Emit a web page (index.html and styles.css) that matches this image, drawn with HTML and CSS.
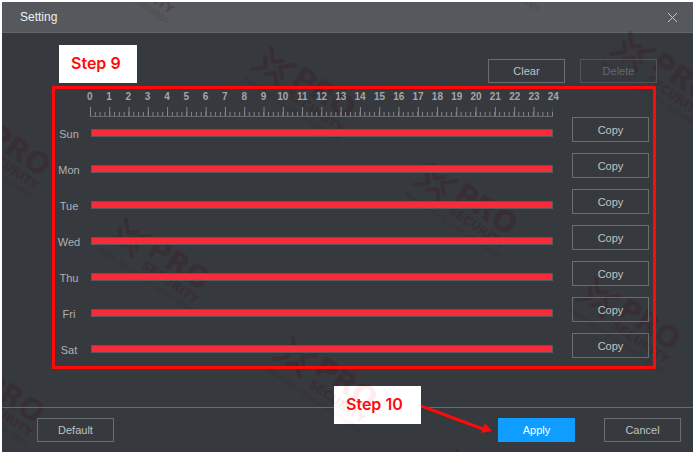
FILE: index.html
```html
<!DOCTYPE html>
<html lang="en">
<head>
<meta charset="utf-8">
<title>Setting</title>
<link rel="stylesheet" href="styles.css">
</head>
<body>
<main class="dialog">
  <header class="dialog-head">
    <h1>Setting</h1>
    <button class="close" aria-label="Close"><svg width="11" height="11" viewBox="0 0 11 11"><path d="M1 1L10 10M10 1L1 10"/></svg></button>
  </header>

  <svg class="watermark" aria-hidden="true">
    <defs>
      <g id="mark">
        <path class="mark-x" d="M-2-19L0-5L9-6M-8-10L-7 0L-21 2M22-2L7 0L9 11M4 19L2 6L-8 7"/>
        <g transform="rotate(34)">
          <text class="mark-name" x="23" y="3">PRO</text>
          <text class="mark-sub" x="27" y="17">SECURITY</text>
          <text class="mark-small" x="-19" y="27">Master Security Licence 000108925</text>
        </g>
      </g>
    </defs>
    <use href="#mark" x="101" y="-54"/>
    <use href="#mark" x="471" y="-66"/>
    <use href="#mark" x="271" y="65"/>
    <use href="#mark" x="630" y="50"/>
    <use href="#mark" x="-34" y="122"/>
    <use href="#mark" x="433" y="181"/>
    <use href="#mark" x="126" y="236"/>
    <use href="#mark" x="596" y="296"/>
    <use href="#mark" x="293" y="355"/>
    <use href="#mark" x="-40" y="369"/>
    <use href="#mark" x="457" y="468"/>
  </svg>

  <div class="tools">
    <button class="btn">Clear</button>
    <button class="btn" disabled>Delete</button>
  </div>

  <section class="schedule" aria-label="Weekly schedule">
    <div class="hours">
      <span>0</span><span>1</span><span>2</span><span>3</span><span>4</span><span>5</span><span>6</span><span>7</span><span>8</span><span>9</span><span>10</span><span>11</span><span>12</span><span>13</span><span>14</span><span>15</span><span>16</span><span>17</span><span>18</span><span>19</span><span>20</span><span>21</span><span>22</span><span>23</span><span>24</span>
    </div>
    <div class="ruler"></div>
    <div class="days">
      <div class="day"><span class="name">Sun</span><div class="bar"></div><button class="btn">Copy</button></div>
      <div class="day"><span class="name">Mon</span><div class="bar"></div><button class="btn">Copy</button></div>
      <div class="day"><span class="name">Tue</span><div class="bar"></div><button class="btn">Copy</button></div>
      <div class="day"><span class="name">Wed</span><div class="bar"></div><button class="btn">Copy</button></div>
      <div class="day"><span class="name">Thu</span><div class="bar"></div><button class="btn">Copy</button></div>
      <div class="day"><span class="name">Fri</span><div class="bar"></div><button class="btn">Copy</button></div>
      <div class="day"><span class="name">Sat</span><div class="bar"></div><button class="btn">Copy</button></div>
    </div>
  </section>

  <footer class="dialog-foot">
    <button class="btn">Default</button>
    <button class="btn primary">Apply</button>
    <button class="btn">Cancel</button>
    <svg class="arrow" width="76" height="32" viewBox="0 0 76 32" aria-hidden="true"><path class="shaft" d="M0 3L62 26"/><path class="tip" d="M71 28L60 30L64 20Z"/></svg>
    <div class="callout step-10"><svg class="tint" aria-hidden="true"><use href="#mark" x="-39" y="-29"/></svg><span>Step 10</span></div>
  </footer>

  <div class="callout step-9"><span>Step 9</span></div>
</main>
</body>
</html>
```
FILE: styles.css
```css
* { box-sizing: border-box; }

body {
  margin: 0;
  padding: 2px 2px 1px;
  background: #fff;
  font: 11px/14px "Liberation Sans", Arial, sans-serif;
  color: #b0b2b4;
}

.dialog {
  position: relative;
  background: #36393d;
}

.dialog-head {
  display: flex;
  align-items: center;
  justify-content: space-between;
  height: 31px;
  padding: 0 15px 0 18px;
  background: #55585c;
  border-bottom: 1px solid #64676a;
}

h1 {
  margin: 0;
  font-size: 12px;
  font-weight: 400;
  color: #f0f0f0;
}

.close {
  display: flex;
  padding: 0;
  border: 0;
  background: none;
}

.close path {
  fill: none;
  stroke: #c4c5c7;
}

.watermark {
  position: absolute;
  inset: 0;
  width: 100%;
  height: 100%;
  overflow: hidden;
  pointer-events: none;
  color: #40101c;
  opacity: 0.24;
}

.mark-x {
  fill: none;
  stroke: currentColor;
  stroke-width: 4;
  stroke-linecap: round;
  stroke-linejoin: round;
}

#mark text { fill: currentColor; }
.mark-name { font: bold 29px "DejaVu Sans", sans-serif; }
.mark-sub { font: bold 12px "DejaVu Sans", sans-serif; }
.mark-small { font: 7px "Open Sans", sans-serif; }

.btn {
  width: 77px;
  height: 24px;
  padding: 0;
  border: 1px solid #6a6d70;
  border-radius: 0;
  background: none;
  color: #c0c2c4;
  font: inherit;
}

.btn:disabled {
  border-color: #505458;
  color: #646a70;
}

.btn.primary {
  border-color: #0f9dff;
  background: #0f9dff;
  color: #fff;
}

.tools {
  position: relative;
  display: flex;
  justify-content: flex-end;
  gap: 15px;
  padding: 26px 36px 3px 0;
}

.schedule {
  position: relative;
  margin: 0 37px 38px 50px;
  padding-right: 4px;
  border: 3px solid #ff0a0a;
}

.hours {
  display: grid;
  grid-template-columns: repeat(25, 1fr);
  margin: 0 86px 0 25px;
  padding: 1px 0 3px;
  font-size: 10px;
  font-weight: 700;
  text-align: center;
  color: #a4a6a9;
}

.ruler {
  height: 10px;
  margin: 0 96px 0 35px;
  border-bottom: 1px solid #686b6e;
  background:
    linear-gradient(to right, #85888a 1px, transparent 1px) 0 0 / calc(100% / 24) 9px repeat-x,
    linear-gradient(to right, #85888a 1px, transparent 1px) 0 100% / calc(100% / 96) 4px repeat-x;
}

.days {
  display: flex;
  flex-direction: column;
  gap: 11px;
  padding-bottom: 8px;
}

.day {
  display: grid;
  grid-template-columns: 28px 1fr 77px;
  align-items: start;
}

.day .btn { height: 25px; }

.name {
  padding-top: 10px;
  text-align: center;
}

.bar {
  height: 8px;
  margin: 12px 19px 0 8px;
  border: 1px solid #565a60;
  background: #f92b36;
}

.dialog-foot {
  position: relative;
  display: flex;
  gap: 29px;
  padding: 10px 12px 10px 35px;
  border-top: 1px solid #686b6e;
}

.dialog-foot .primary { margin-left: auto; }

.callout {
  position: absolute;
  height: 38px;
  padding: 0 12px;
  overflow: hidden;
  background: #fff;
  color: #ff0a0a;
  font: 600 16px/36px Inter, sans-serif;
  white-space: nowrap;
}

.callout span { position: relative; }

.step-9 {
  top: 43px;
  left: 57px;
  min-width: 78px;
}

.step-10 {
  top: -22px;
  right: 272px;
  min-width: 87px;
}

.tint {
  position: absolute;
  inset: 0;
  width: 100%;
  height: 100%;
  color: #ff5060;
  opacity: 0.1;
}

.arrow {
  position: absolute;
  top: -5px;
  right: 196px;
}

.shaft {
  fill: none;
  stroke: #ff0a0a;
  stroke-width: 3;
}

.tip { fill: #ff0a0a; }
```
